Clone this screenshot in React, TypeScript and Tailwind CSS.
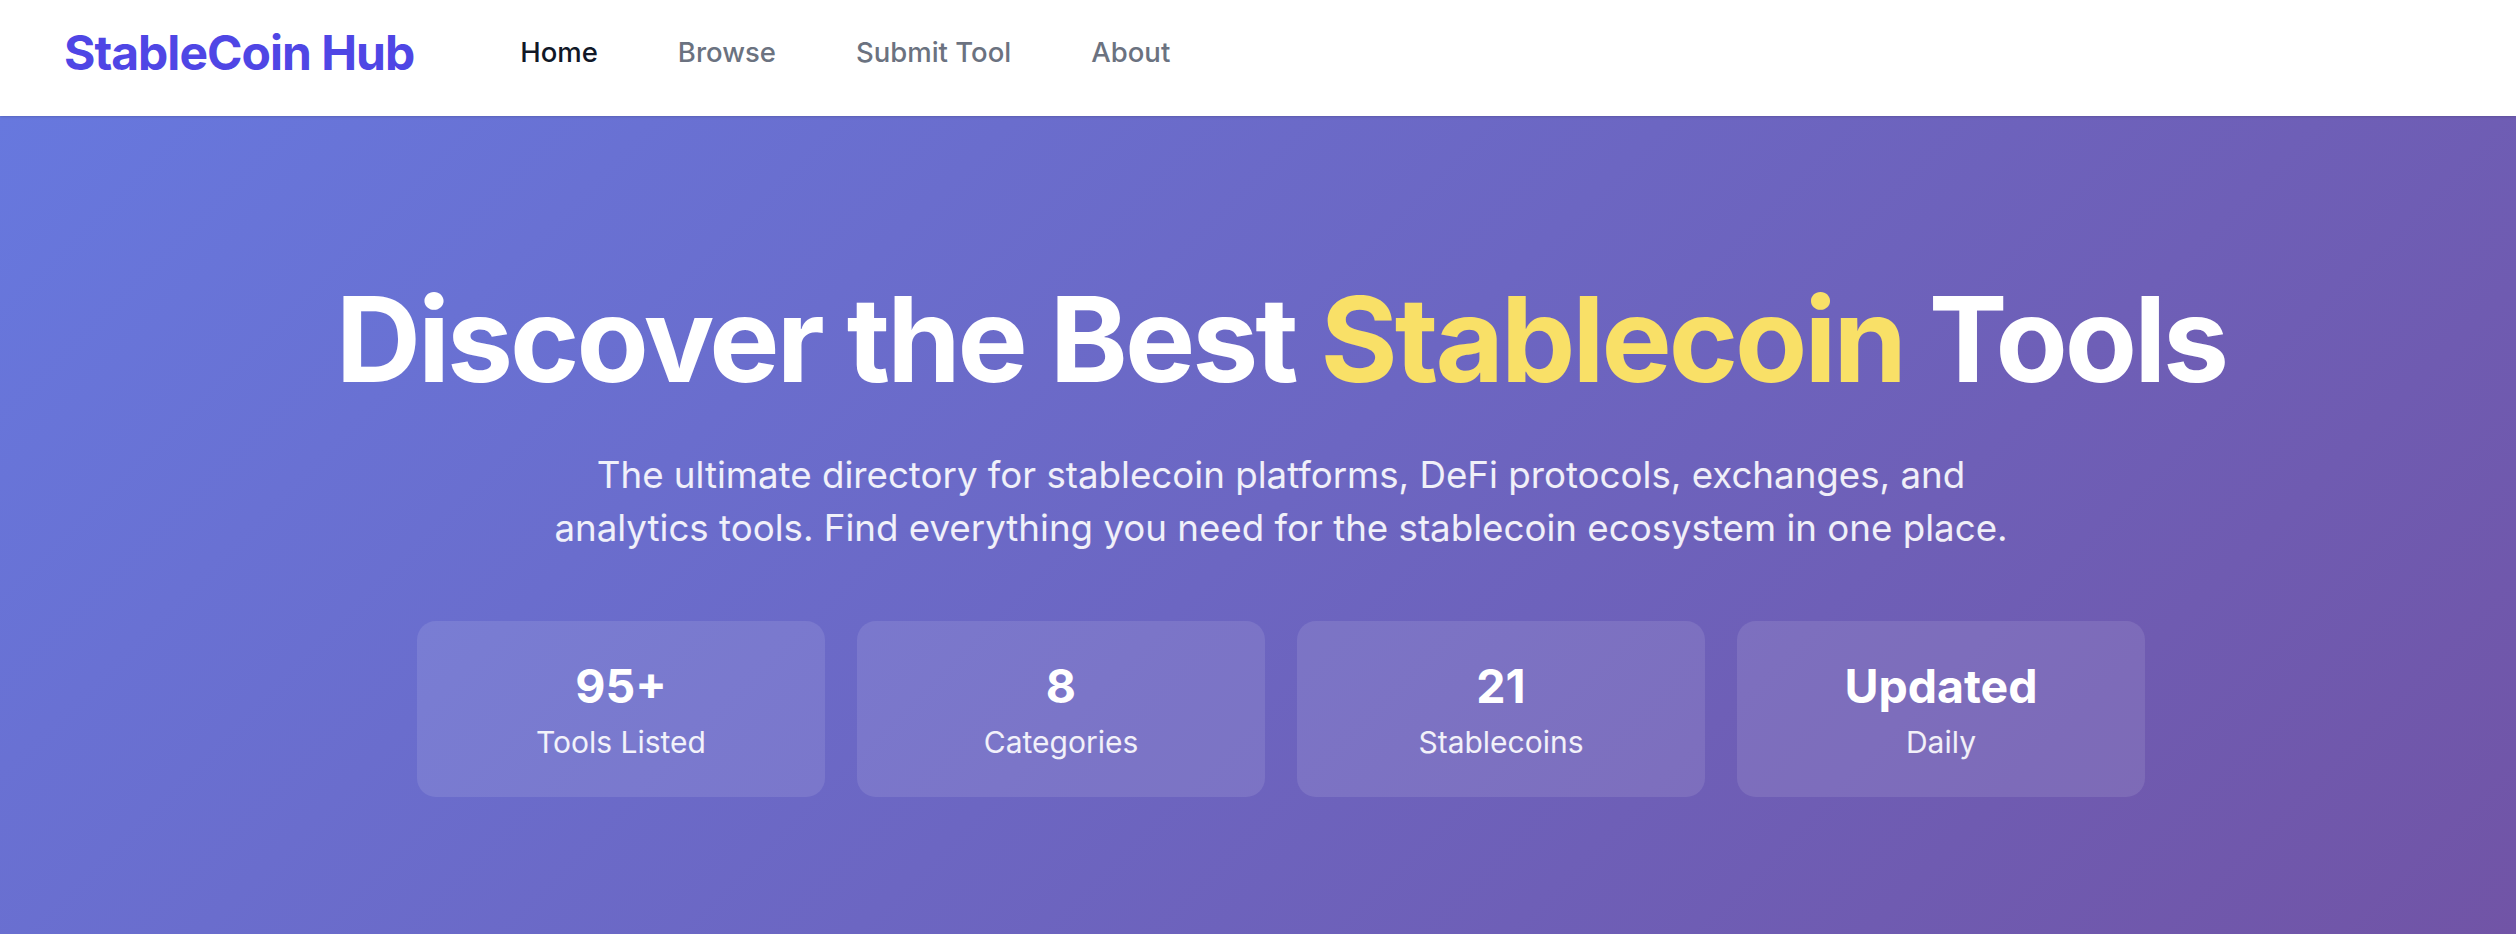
import React from "react";

const stats = [
  { value: "95+", label: "Tools Listed" },
  { value: "8", label: "Categories" },
  { value: "21", label: "Stablecoins" },
  { value: "Updated", label: "Daily" },
];

export default function App() {
  return (
    <div className="min-h-screen font-['Inter',sans-serif] bg-[#7154a6]">
      <header className="h-[116px] bg-white shadow-sm flex items-center pl-[64px] pb-[11px] relative z-10">
        <div className="text-[48px] leading-none font-bold text-[#4f46e5] tracking-[-1px]">StableCoin Hub</div>
        <nav className="flex items-center gap-[80px] ml-[106px] text-[27.5px] font-medium">
          <a className="text-[#111827]">Home</a>
          <a className="text-[#6b7280]">Browse</a>
          <a className="text-[#6b7280]">Submit Tool</a>
          <a className="text-[#6b7280]">About</a>
        </nav>
      </header>
      <section className="h-[818px] bg-[linear-gradient(135deg,#6778de_0%,#7154a6_100%)] pt-[164px] pl-[46px] flex flex-col items-center text-center">
        <h1 className="text-[118px] leading-none font-bold text-white tracking-[-3px]">
          Discover the Best <span className="text-[#f9e067]">Stablecoin</span> Tools
        </h1>
        <p className="mt-[50px] text-[36.7px] leading-[53px] text-white/90">
          The ultimate directory for stablecoin platforms, DeFi protocols, exchanges, and
          <br />
          analytics tools. Find everything you need for the stablecoin ecosystem in one place.
        </p>
        <div className="mt-[67px] grid grid-cols-4 gap-[32px]">
          {stats.map((s) => (
            <div
              key={s.label}
              className="w-[408px] h-[176px] rounded-[19px] bg-white/10 flex flex-col items-center pt-[36px]"
            >
              <div className="text-[46.5px] leading-[58px] font-bold text-white">{s.value}</div>
              <div className="mt-[5px] text-[30px] leading-[45px] text-white/90">{s.label}</div>
            </div>
          ))}
        </div>
      </section>
    </div>
  );
}
